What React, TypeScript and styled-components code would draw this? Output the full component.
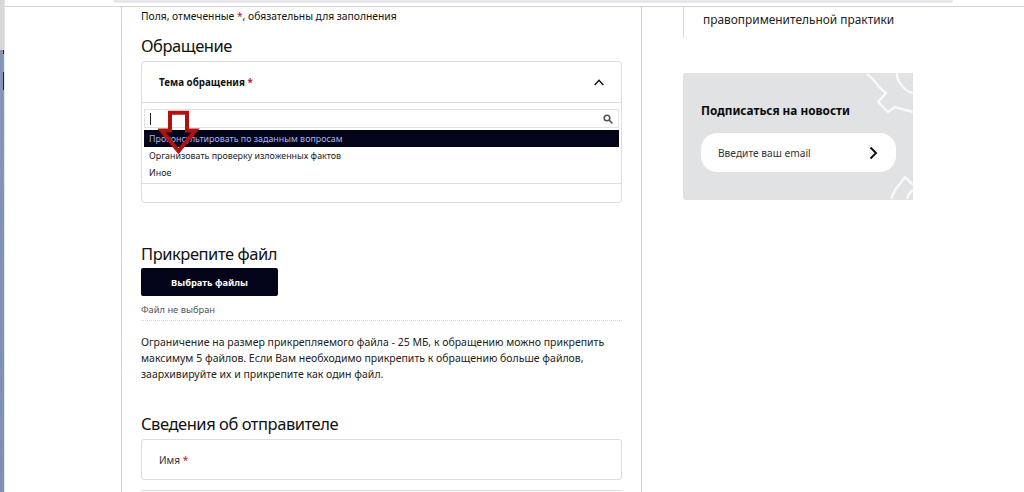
import React from 'react'
import styled, { createGlobalStyle } from 'styled-components'

const GlobalStyle = createGlobalStyle`
  html, body {
    margin: 0;
    padding: 0;
    background: #fff;
    overflow: hidden;
  }
  * {
    box-sizing: border-box;
  }
`

const Page = styled.div`
  display: flex;
  width: 1024px;
  height: 492px;
  overflow: hidden;
  font-family: 'Noto Sans', 'Open Sans', sans-serif;
  color: #111;
  background: #fff;
`

const WindowEdge = styled.div`
  flex: none;
  width: 5px;
  border-right: 1px solid #e4e6ea;
  background:
    linear-gradient(
        to bottom,
        transparent 50px,
        #1c2a3c 50px,
        #1c2a3c 54px,
        #8fa0b8 54px,
        #8fa0b8 72px,
        #1a2436 72px,
        #1a2436 90px,
        transparent 90px
      )
      right / 1px 100% no-repeat,
    linear-gradient(to bottom, #d8d8d8 0, #d8d8d8 50px, #8496b4 50px, #7f90b0 100%);
`

const Viewport = styled.div`
  flex: 1;
  display: flex;
  flex-direction: column;
  min-width: 0;
`

const TopStrip = styled.div`
  flex: none;
  height: 7px;
  padding-left: 108px;
  border-bottom: 1px solid #d4d4d4;
`

const ScrollThumb = styled.div`
  width: 840px;
  height: 3px;
  background: #e6e8ec;
  border-radius: 0 0 3px 3px;
`

const Columns = styled.div`
  flex: 1;
  display: flex;
  align-items: flex-start;
  padding-left: 116px;
`

const MainColumn = styled.main`
  flex: none;
  width: 521px;
  height: 490px;
  padding: 2px 19px 0;
  border-left: 1px solid #d0d0d0;
  border-right: 1px solid #d0d0d0;
`

const Note = styled.p`
  margin: 0;
  font-size: 10.3px;
  line-height: 15px;
`

const Req = styled.span`
  color: #c8102e;
`

const SectionTitle = styled.h2<{ $top: number }>`
  margin: ${({ $top }) => $top}px 0 0;
  font-size: 16.5px;
  line-height: 24px;
  font-weight: 400;
  letter-spacing: -0.45px;
  color: #111;
`

const SelectCard = styled.div`
  position: relative;
  height: 142px;
  margin-top: 3px;
  border: 1px solid #dcdcdc;
  border-radius: 4px;
`

const SelectHeader = styled.div`
  display: flex;
  align-items: center;
  justify-content: space-between;
  height: 41px;
  padding: 0 17px;
  border-bottom: 1px solid #dcdcdc;
  font-size: 9.8px;
  font-weight: 700;
`

const Dropdown = styled.div`
  height: 81px;
  padding: 6px 2px 0;
  border-bottom: 1px solid #dcdcdc;
`

const SearchBox = styled.div`
  display: flex;
  align-items: center;
  justify-content: space-between;
  height: 19px;
  padding: 0 5px;
  border: 1px solid #e2e2e2;
`

const Caret = styled.span`
  width: 1px;
  height: 12px;
  background: #222;
`

const Option = styled.div<{ $active?: boolean }>`
  height: 17px;
  padding-left: 5px;
  font-size: 8.9px;
  line-height: 17px;
  background: ${({ $active }) => ($active ? '#03031a' : 'transparent')};
  color: ${({ $active }) => ($active ? '#a9b4f0' : '#222')};
`

const Options = styled.div`
  margin-top: 2px;
`

const ArrowMark = styled.svg`
  position: absolute;
  left: 16px;
  top: 47px;
`

const UploadButton = styled.button`
  display: block;
  width: 137px;
  height: 28px;
  margin-top: 2px;
  border: 0;
  border-radius: 2px;
  background: #03031a;
  color: #fff;
  font-family: inherit;
  font-size: 9.3px;
  font-weight: 700;
`

const FileStatus = styled.div`
  height: 25px;
  padding-top: 7px;
  border-bottom: 1px dotted #d4d4d4;
  font-size: 9.3px;
  line-height: 14px;
  color: #555;
`

const Limits = styled.p`
  margin: 13px 0 0;
  font-size: 10.5px;
  line-height: 16px;
  color: #222;
`

const FieldCard = styled.div`
  display: flex;
  align-items: center;
  height: 41px;
  margin-top: 3px;
  padding: 0 17px;
  border: 1px solid #dcdcdc;
  border-radius: 3px;
  font-size: 10px;
  color: #333;
`

const NextFieldEdge = styled.div`
  height: 1px;
  margin-top: 10px;
  background: #dcdcdc;
`

const Sidebar = styled.aside`
  flex: none;
  width: 230px;
  margin-left: 41px;
`

const SideLink = styled.div`
  height: 31px;
  padding: 4px 0 0 19px;
  border-left: 1px solid #dcdcdc;
  font-size: 11.9px;
  line-height: 16px;
  color: #222;
`

const Subscribe = styled.section`
  position: relative;
  height: 127px;
  margin-top: 35px;
  padding: 29px 17px 0 18px;
  background: #e0e2e4;
  border-radius: 3px 0 0 3px;
  overflow: hidden;
`

const SubscribeTitle = styled.h3`
  position: relative;
  margin: 0;
  font-size: 11.8px;
  line-height: 16px;
  font-weight: 700;
  color: #0a0a0a;
`

const EmailPill = styled.div`
  position: relative;
  display: flex;
  align-items: center;
  justify-content: space-between;
  height: 39px;
  margin-top: 15px;
  padding: 0 18px 0 17px;
  background: #fff;
  border-radius: 16px;
  font-size: 10.2px;
  color: #333;
`

const GearMark = styled.svg`
  position: absolute;
  right: 0;
  top: 0;
`

const App = () => (
  <Page>
    <GlobalStyle />
    <WindowEdge />
    <Viewport>
      <TopStrip>
        <ScrollThumb />
      </TopStrip>
      <Columns>
        <MainColumn>
          <Note>
            Поля, отмеченные <Req>*</Req>, обязательны для заполнения
          </Note>
          <SectionTitle $top={10}>Обращение</SectionTitle>
          <SelectCard>
            <SelectHeader>
              <span>
                Тема обращения <Req>*</Req>
              </span>
              <svg width="10" height="7" viewBox="0 0 10 7" fill="none" stroke="#111" strokeWidth="1.4">
                <path d="M.7 6L5 1.2 9.3 6" />
              </svg>
            </SelectHeader>
            <Dropdown>
              <SearchBox>
                <Caret />
                <svg width="10" height="10" viewBox="0 0 10 10" fill="none" stroke="#555" strokeWidth="1.6">
                  <circle cx="4" cy="4" r="2.8" />
                  <path d="M6 6l3.4 3.4" />
                </svg>
              </SearchBox>
              <Options>
                <Option $active>Проконсультировать по заданным вопросам</Option>
                <Option>Организовать проверку изложенных фактов</Option>
                <Option>Иное</Option>
              </Options>
            </Dropdown>
            <ArrowMark width="42" height="46" viewBox="0 0 42 46" fill="none" stroke="#b01212" strokeWidth="4">
              <path d="M12 3.7h17v17.8h8.5L20.5 42 3.5 21.5H12z" />
            </ArrowMark>
          </SelectCard>
          <SectionTitle $top={39}>Прикрепите файл</SectionTitle>
          <UploadButton type="button">Выбрать файлы</UploadButton>
          <FileStatus>Файл не выбран</FileStatus>
          <Limits>
            Ограничение на размер прикрепляемого файла - 25 МБ, к обращению можно прикрепить
            <br />
            максимум 5 файлов. Если Вам необходимо прикрепить к обращению больше файлов,
            <br />
            заархивируйте их и прикрепите как один файл.
          </Limits>
          <SectionTitle $top={30}>Сведения об отправителе</SectionTitle>
          <FieldCard>
            <span>
              Имя <Req>*</Req>
            </span>
          </FieldCard>
          <NextFieldEdge />
        </MainColumn>
        <Sidebar>
          <SideLink>правоприменительной практики</SideLink>
          <Subscribe>
            <GearMark width="60" height="127" viewBox="0 0 60 127" fill="none" stroke="#f8f9fa" strokeWidth="2.4">
              <path d="M14 1l6 5 6 8 7 6-8 9 10 10 7-5 18 5" />
              <path d="M44 0c0 4 1 8 3 10 3 5 8 9 13 10" />
              <path d="M60 112l-8-8-6 8-4 5-4 9" />
              <path d="M60 117c-3 2-5 5-6 9" />
            </GearMark>
            <SubscribeTitle>Подписаться на новости</SubscribeTitle>
            <EmailPill>
              <span>Введите ваш email</span>
              <svg width="9" height="14" viewBox="0 0 9 14" fill="none" stroke="#111" strokeWidth="2">
                <path d="M1.5 1.5L7 7l-5.5 5.5" />
              </svg>
            </EmailPill>
          </Subscribe>
        </Sidebar>
      </Columns>
    </Viewport>
  </Page>
)

export default App
